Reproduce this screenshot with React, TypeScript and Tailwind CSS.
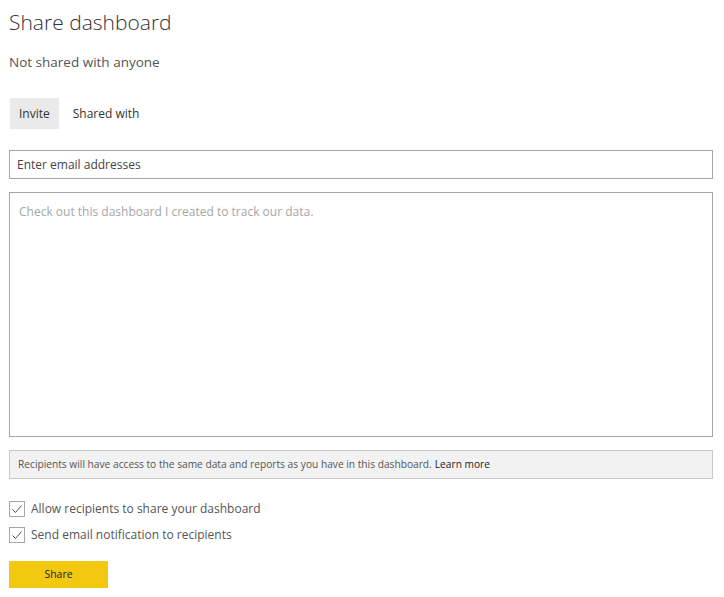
export default function App() {
  const font = { fontFamily: '"Segoe UI", "Open Sans", "Noto Sans", sans-serif' }

  return (
    <div className="w-[724px] h-[597px] bg-white text-[#333] px-[9px] pt-[6px] overflow-hidden" style={font}>
      <h1 className="text-[21px] font-light text-[#333] leading-[32px]">Share dashboard</h1>
      <p className="mt-[14px] text-[13.5px] text-[#555] leading-[20px]">Not shared with anyone</p>

      <div className="mt-[26px] flex items-center ml-[1px]">
        <button className="h-[31px] px-[9px] bg-[#eaeaea] text-[12px] text-[#333]">Invite</button>
        <button className="h-[31px] px-[14px] text-[12px] text-[#333]">Shared with</button>
      </div>

      <div className="mt-[21px] h-[29px] w-[704px] border border-[#a6a6a6] flex items-center px-[7px] text-[12px] text-[#444]">
        Enter email addresses
      </div>

      <div className="mt-[13px] h-[245px] w-[704px] border border-[#a6a6a6] px-[9px] pt-[10px] text-[12px] text-[#a6a6a6]">
        Check out this dashboard I created to track our data.
      </div>

      <div className="mt-[13px] h-[29px] w-[704px] border border-[#c8c8c8] bg-[#f2f2f2] flex items-center px-[8px] text-[10.2px] text-[#555]">
        Recipients will have access to the same data and reports as you have in this dashboard.
        <span className="ml-[3px] text-[#222]">Learn more</span>
      </div>

      <div className="mt-[21px] flex flex-col gap-[9px]">
        {["Allow recipients to share your dashboard", "Send email notification to recipients"].map((label) => (
          <div key={label} className="flex items-center gap-[6px] h-[17px]">
            <span className="w-[16px] h-[16px] border border-[#a6a6a6] flex items-center justify-center">
              <svg width="12" height="12" viewBox="0 0 12 12" fill="none">
                <path d="M1.5 6.5 L4.5 9.5 L10.5 2.5" stroke="#555" strokeWidth="1" />
              </svg>
            </span>
            <span className="text-[12px] text-[#555]">{label}</span>
          </div>
        ))}
      </div>

      <button className="mt-[18px] w-[99px] h-[27px] bg-[#f2c811] text-[10.5px] text-[#222]">Share</button>
    </div>
  )
}
